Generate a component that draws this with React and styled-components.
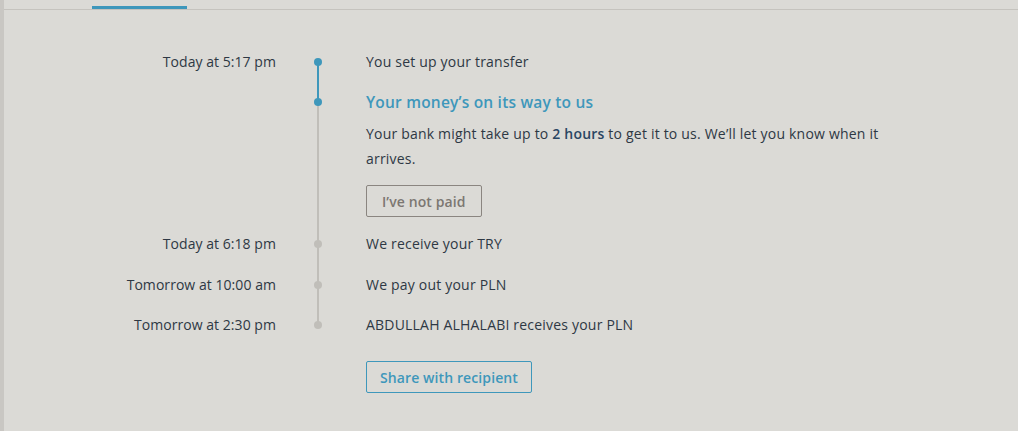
import React from 'react';
import styled, { createGlobalStyle } from 'styled-components';

const GlobalStyle = createGlobalStyle`
  body {
    margin: 0;
    background: #dbdad6;
    font-family: "Open Sans", "Liberation Sans", sans-serif;
    color: #2e3844;
  }
`;

const BLUE = '#3e97bb';
const GREY = '#c0beb9';

const Page = styled.div`
  display: flex;
  min-height: 431px;
`;

const SideStrip = styled.div`
  width: 4px;
  background: #c9c7c3;
  flex-shrink: 0;
`;

const Main = styled.div`
  flex: 1;
`;

const TabBar = styled.div`
  display: flex;
  align-items: flex-end;
  height: 9px;
  padding-left: 88px;
  border-bottom: 1px solid #c5c3be;
`;

const ActiveTab = styled.div`
  width: 95px;
  height: 3px;
  background: ${BLUE};
`;

const Timeline = styled.div`
  padding-top: 42px;
  margin-left: -4px;
`;

const Row = styled.div`
  display: grid;
  grid-template-columns: 276px 84px 1fr;
  padding-bottom: ${(p) => p.$gap}px;
`;

const DateCell = styled.div`
  text-align: right;
  font-size: 14px;
  letter-spacing: 0.05px;
  line-height: 20px;
  color: #2e3844;
`;

const Rail = styled.div`
  position: relative;

  &::before {
    content: '';
    display: ${(p) => (p.$up ? 'block' : 'none')};
    position: absolute;
    left: 41px;
    top: 0;
    height: 10px;
    width: 2px;
    background: ${(p) => p.$up};
  }

  &::after {
    content: '';
    display: ${(p) => (p.$down ? 'block' : 'none')};
    position: absolute;
    left: 41px;
    top: 10px;
    bottom: -${(p) => p.$gap}px;
    width: 2px;
    background: ${(p) => p.$down};
  }
`;

const Dot = styled.span`
  position: absolute;
  left: 38px;
  top: 6px;
  width: 8px;
  height: 8px;
  border-radius: 50%;
  background: ${(p) => p.$color};
  z-index: 1;
`;

const Content = styled.div`
  padding-left: 6px;
  font-size: 14px;
  letter-spacing: 0.2px;
  line-height: 20px;
`;

const Heading = styled.div`
  color: ${BLUE};
  font-size: 15.5px;
  font-weight: 600;
  letter-spacing: 0.2px;
  line-height: 20px;
`;

const Para = styled.p`
  margin: 9px 0 0;
  line-height: 25px;
  max-width: 530px;

  strong {
    font-weight: 600;
    color: #2a4663;
  }
`;

const Button = styled.button`
  display: block;
  margin-top: ${(p) => p.$top || 0}px;
  height: 32px;
  padding: 0 ${(p) => p.$pad}px;
  background: transparent;
  border: 1px solid ${(p) => (p.$primary ? BLUE : '#8a8580')};
  border-radius: 2px;
  color: ${(p) => (p.$primary ? BLUE : '#7c7772')};
  font-family: inherit;
  font-size: 14px;
  font-weight: 600;
  letter-spacing: 0.1px;
  cursor: pointer;
`;

const Footer = styled.div`
  display: grid;
  grid-template-columns: 360px 1fr;
  padding-top: 26px;
`;

const steps = [
  { date: 'Today at 5:17 pm', dot: BLUE, down: BLUE, gap: 20, text: 'You set up your transfer' },
  { date: '', dot: BLUE, up: BLUE, down: GREY, gap: 17, current: true },
  { date: 'Today at 6:18 pm', dot: GREY, up: GREY, down: GREY, gap: 21, text: 'We receive your TRY' },
  { date: 'Tomorrow at 10:00 am', dot: GREY, up: GREY, down: GREY, gap: 20, text: 'We pay out your PLN' },
  { date: 'Tomorrow at 2:30 pm', dot: GREY, up: GREY, gap: 0, text: 'ABDULLAH ALHALABI receives your PLN' },
];

export default function App() {
  return (
    <>
      <GlobalStyle />
      <Page>
        <SideStrip />
        <Main>
          <TabBar>
            <ActiveTab />
          </TabBar>
          <Timeline>
            {steps.map((s, i) => (
              <Row key={i} $gap={s.gap}>
                <DateCell>{s.date}</DateCell>
                <Rail $up={s.up} $down={s.down} $gap={s.gap}>
                  <Dot $color={s.dot} />
                </Rail>
                <Content>
                  {s.current ? (
                    <>
                      <Heading>Your money’s on its way to us</Heading>
                      <Para>
                        Your bank might take up to <strong>2 hours</strong> to get it to us. We’ll let you know when it arrives.
                      </Para>
                      <Button $top={14} $pad={15}>I’ve not paid</Button>
                    </>
                  ) : (
                    s.text
                  )}
                </Content>
              </Row>
            ))}
            <Footer>
              <div />
              <Content>
                <Button $primary $pad={13}>Share with recipient</Button>
              </Content>
            </Footer>
          </Timeline>
        </Main>
      </Page>
    </>
  );
}
